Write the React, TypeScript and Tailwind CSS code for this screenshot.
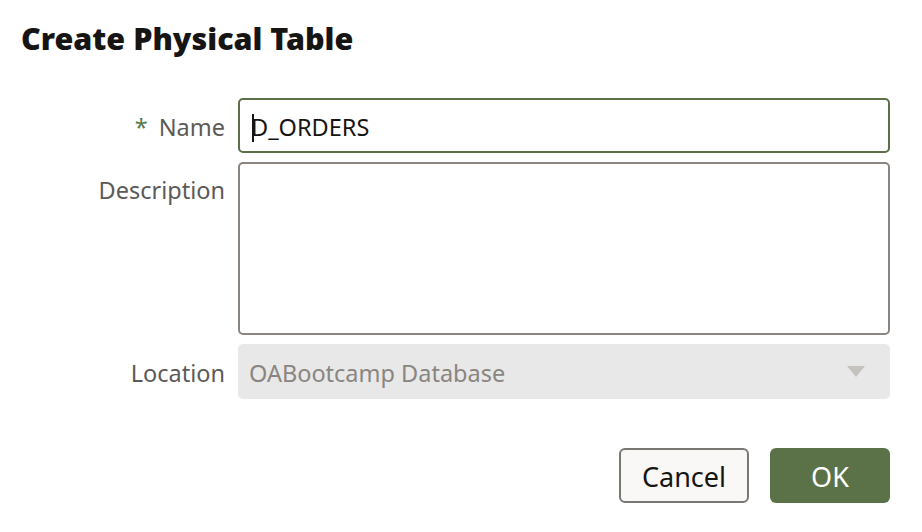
import { useState } from "react";

const font = { fontFamily: '"Noto Sans", "Open Sans", sans-serif' };

export default function App() {
  const [name] = useState("D_ORDERS");
  const [description, setDescription] = useState("");

  return (
    <div className="min-h-screen w-full bg-white text-[#161513]" style={font}>
      <div className="pl-[21px] pr-[32px] pt-[17px]">
        <h1 className="text-[30.5px] font-black leading-[42px] text-[#161513]">
          Create Physical Table
        </h1>

        <div className="mt-[39px] grid grid-cols-[204px_1fr] gap-x-[13px] gap-y-[9px]">
          <label className="flex h-[55px] items-center justify-end pt-[4px] text-[23.5px] text-[#5c5a58]">
            <span className="mr-[11px] text-[#5a7a48]">*</span>
            Name
          </label>
          <div className="relative flex h-[55px] items-center rounded-[5px] border-2 border-[#5b7049] px-[11px] pt-[4px] text-[23.5px] text-[#161513]">
            <span className="absolute left-[12px] top-[14px] h-[28px] w-[2px] bg-[#161513]" />
            <span>{name}</span>
          </div>

          <label className="pt-[11px] text-right text-[23.5px] text-[#5c5a58]">Description</label>
          <textarea
            value={description}
            onChange={(e) => setDescription(e.target.value)}
            className="h-[173px] resize-none rounded-[5px] border-2 border-[#8a8580] px-[11px] py-[10px] text-[23.5px] outline-none"
          />

          <label className="flex h-[55px] items-center justify-end pt-[4px] text-[23.5px] text-[#5c5a58]">Location</label>
          <div className="flex h-[55px] items-center justify-between rounded-[5px] bg-[#e8e8e8] pl-[11px] pr-[25px] text-[23.5px] text-[#8a8580]">
            <span className="pt-[4px]">OABootcamp Database</span>
            <svg width="18" height="11" viewBox="0 0 18 11">
              <path d="M0 0 H18 L9 11 Z" fill="#c6c3bf" />
            </svg>
          </div>
        </div>

        <div className="mt-[49px] flex justify-end gap-[21px]">
          <button className="h-[55px] w-[130px] rounded-[6px] border-2 border-[#7a7672] bg-[#f9f8f6] pt-[4px] text-[27px] text-[#161513]">
            Cancel
          </button>
          <button className="h-[55px] w-[120px] rounded-[6px] bg-[#5b7249] pt-[4px] text-[27px] text-white">
            OK
          </button>
        </div>
      </div>
    </div>
  );
}
